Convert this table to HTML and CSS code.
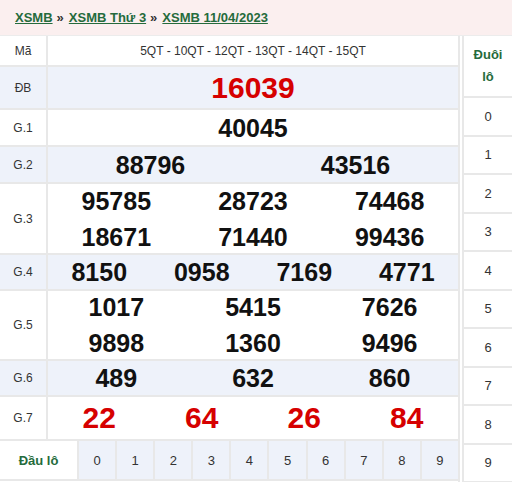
FILE: index.html
```html
<!DOCTYPE html>
<html lang="vi">
<head>
<meta charset="utf-8">
<title>XSMB 11/04/2023</title>
<link rel="stylesheet" href="styles.css">
</head>
<body>
<div class="crumbs">
  <a href="#">XSMB</a><span class="sep">»</span><a href="#">XSMB Thứ 3</a><span class="sep">»</span><a href="#">XSMB 11/04/2023</a>
</div>
<div class="wrap">
  <div class="main">
    <div class="row r-ma">
      <div class="lbl">Mã</div>
      <div class="vals code">5QT - 10QT - 12QT - 13QT - 14QT - 15QT</div>
    </div>
    <div class="row r-db alt">
      <div class="lbl">ĐB</div>
      <div class="vals"><span class="num big red">16039</span></div>
    </div>
    <div class="row r-g1">
      <div class="lbl">G.1</div>
      <div class="vals"><span class="num">40045</span></div>
    </div>
    <div class="row r-g2 alt">
      <div class="lbl">G.2</div>
      <div class="vals"><span class="num">88796</span><span class="num">43516</span></div>
    </div>
    <div class="row r-g3">
      <div class="lbl">G.3</div>
      <div class="vals three"><span class="num">95785</span><span class="num">28723</span><span class="num">74468</span><span class="num">18671</span><span class="num">71440</span><span class="num">99436</span></div>
    </div>
    <div class="row r-g4 alt">
      <div class="lbl">G.4</div>
      <div class="vals"><span class="num">8150</span><span class="num">0958</span><span class="num">7169</span><span class="num">4771</span></div>
    </div>
    <div class="row r-g5">
      <div class="lbl">G.5</div>
      <div class="vals three"><span class="num">1017</span><span class="num">5415</span><span class="num">7626</span><span class="num">9898</span><span class="num">1360</span><span class="num">9496</span></div>
    </div>
    <div class="row r-g6 alt">
      <div class="lbl">G.6</div>
      <div class="vals"><span class="num">489</span><span class="num">632</span><span class="num">860</span></div>
    </div>
    <div class="row r-g7">
      <div class="lbl">G.7</div>
      <div class="vals"><span class="num big red">22</span><span class="num big red">64</span><span class="num big red">26</span><span class="num big red">84</span></div>
    </div>
    <div class="row r-dl">
      <div class="dl-lbl">Đầu lô</div>
      <div class="dl-cells"><span>0</span><span>1</span><span>2</span><span>3</span><span>4</span><span>5</span><span>6</span><span>7</span><span>8</span><span>9</span></div>
    </div>
  </div>
  <div class="side">
    <div class="side-head">Đuôi<br>lô</div>
    <div class="side-cell">0</div>
    <div class="side-cell">1</div>
    <div class="side-cell">2</div>
    <div class="side-cell">3</div>
    <div class="side-cell">4</div>
    <div class="side-cell">5</div>
    <div class="side-cell">6</div>
    <div class="side-cell">7</div>
    <div class="side-cell">8</div>
    <div class="side-cell">9</div>
  </div>
</div>
</body>
</html>
```
FILE: styles.css
```css
* { box-sizing: border-box; }
body {
  margin: 0;
  font-family: "Liberation Sans", Arial, sans-serif;
  color: #222;
  background: #fff;
}
.crumbs {
  height: 35px;
  background: #fbefef;
  padding: 10px 15px 0;
  font-size: 13px;
  line-height: 16px;
  font-weight: bold;
}
.crumbs a {
  color: #256b3c;
  text-decoration: underline;
}
.crumbs .sep {
  color: #333;
  margin: 0 5px 0 4px;
  font-weight: bold;
}
.wrap {
  display: flex;
  gap: 2px;
  border-top: 1px solid #ececec;
}
.main {
  width: 460px;
  border-right: 2px solid #e8e8e8;
}
.row {
  display: flex;
  border-bottom: 2px solid #e8e8e8;
}
.row.alt { background: #eef2fa; }
.lbl {
  width: 48px;
  flex: none;
  border-right: 2px solid #e8e8e8;
  display: flex;
  align-items: center;
  justify-content: center;
  font-size: 12px;
  color: #333;
}
.vals {
  flex: 1;
  display: flex;
  align-items: center;
}
.vals .num {
  flex: 1;
  text-align: center;
  font-weight: bold;
  font-size: 25px;
  color: #111;
  line-height: 34px;
}
.vals .num.big { font-size: 30px; }
.vals .num.red { color: #d60000; }
.vals.three { flex-wrap: wrap; align-content: center; }
.vals.three .num { flex: none; width: 33.333%; line-height: 36px; }
.code {
  justify-content: center;
  font-size: 12px;
  color: #333;
}
.r-ma { height: 31px; }
.r-db { height: 43px; }
.r-g1 { height: 37px; }
.r-g2 { height: 37px; }
.r-g3 { height: 71px; }
.r-g4 { height: 36px; }
.r-g5 { height: 70px; }
.r-g6 { height: 36px; }
.r-g7 { height: 44px; }
.r-dl { height: 40px; }
.dl-lbl {
  width: 77px;
  flex: none;
  display: flex;
  align-items: center;
  justify-content: center;
  color: #256b3c;
  font-weight: bold;
  font-size: 13px;
  background: #fff;
}
.dl-cells {
  flex: 1;
  display: grid;
  grid-template-columns: repeat(10, 1fr);
}
.dl-cells span {
  display: flex;
  align-items: center;
  justify-content: center;
  font-size: 13px;
  color: #333;
  background: #eef2fa;
  border-left: 2px solid #e8e8e8;
}
.side {
  flex: 1;
  display: flex;
  flex-direction: column;
  border-left: 2px solid #e8e8e8;
}
.side-head {
  height: 62px;
  display: flex;
  align-items: center;
  justify-content: center;
  text-align: center;
  color: #256b3c;
  font-weight: bold;
  font-size: 13px;
  line-height: 22px;
  border-bottom: 2px solid #e8e8e8;
}
.side-cell {
  height: 38.5px;
  display: flex;
  align-items: center;
  justify-content: center;
  font-size: 13px;
  color: #333;
  border-bottom: 2px solid #e8e8e8;
}
```
